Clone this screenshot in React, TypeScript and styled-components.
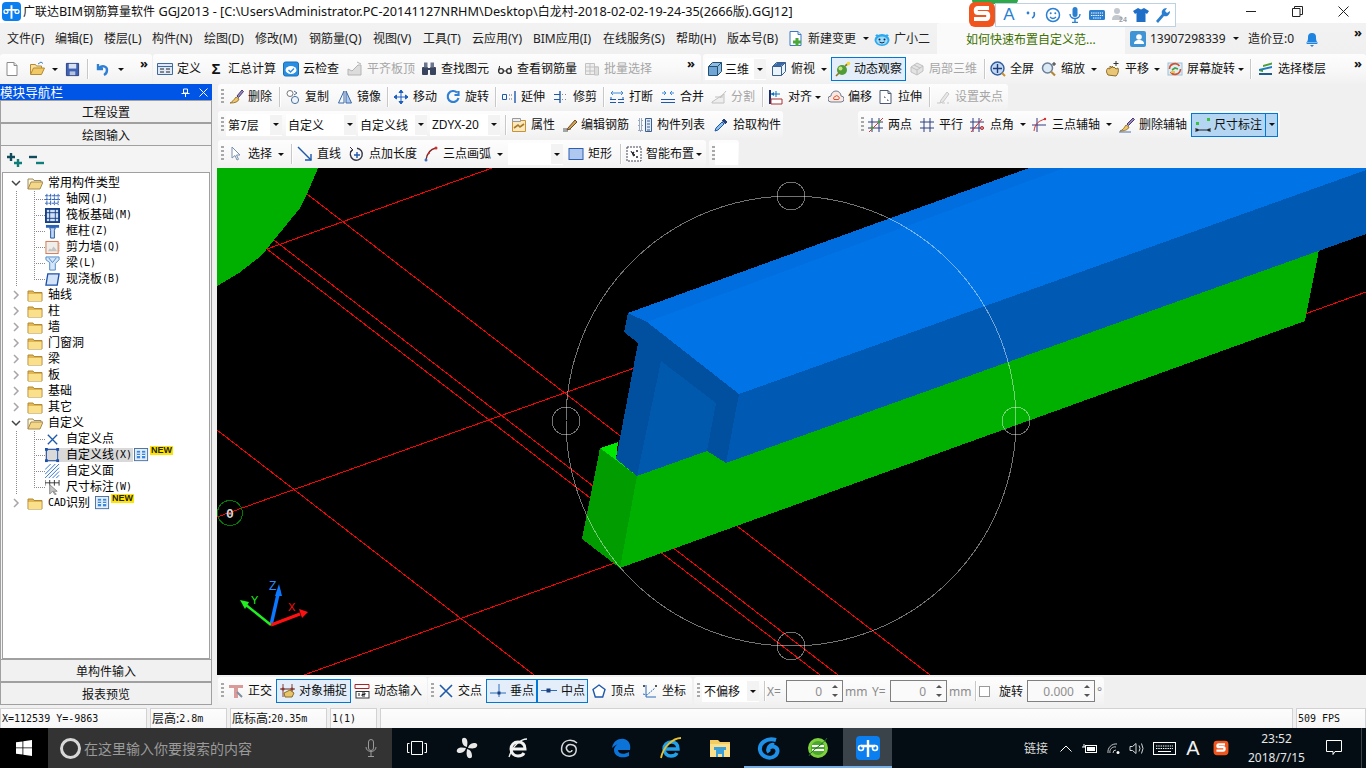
import React from "react";
import styled, { createGlobalStyle, css } from "styled-components";

const Global = createGlobalStyle`
  html, body { margin: 0; padding: 0; background: #f0f0f0; overflow: hidden; }
  body { font-family: "Noto Sans", "Noto Sans CJK SC", sans-serif; font-size: 12px; color: #111; }
  * { box-sizing: border-box; }
`;

const segBg = "linear-gradient(to bottom, #fdfdfd 0%, #f8f8f8 55%, #f1f1f1 100%)";

const Page = styled.div`
  width: 1366px; height: 768px; display: flex; flex-direction: column; overflow: hidden; background: #f0f0f0;
`;
const TitleBar = styled.div`
  height: 23px; background: #fff; display: flex; align-items: center; position: relative; flex: none;
`;
const TitleText = styled.div`
  margin-left: 2px; font-size: 12.7px; line-height: 23px; white-space: nowrap; color: #111;
`;
const Cjk = styled.span`
  font-size: 12px;
`;
const WinBtns = styled.div`
  margin-left: auto; display: flex; align-items: center;
`;
const WinBtn = styled.div`
  width: 46px; height: 23px; display: flex; align-items: center; justify-content: center;
`;
const Ime = styled.div`
  position: absolute; left: 968px; top: 0; width: 208px; height: 28px; display: flex; align-items: center;
`;
const ImeBox = styled.div`
  position: absolute; left: 27px; top: 3px; width: 181px; height: 24px; background: #fff; border: 1px solid #bcd2e2;
  display: flex; align-items: center; padding-left: 5px; gap: 6px;
`;
const ImeTop = styled.div`
  position: absolute; left: 4px; top: 0; width: 46px; height: 4px; background: #2fa84a; border-radius: 0 0 6px 6px;
`;
const ImeLogo = styled.div`
  position: absolute; left: 0; top: 1px;
`;
const ImeA = styled.span`
  width: 16px; flex: none; text-align: center; font-family: "Liberation Sans", sans-serif; font-size: 17px; line-height: 20px; color: #2a7fd0;
`;
const MenuRow = styled.div`
  height: 31px; display: flex; align-items: center; flex: none; background: linear-gradient(to bottom, #f2f2f2, #f0f0f0);
`;
const MenuItem = styled.div<{ $w: number }>`
  width: ${(p) => p.$w}px; flex: none; white-space: nowrap; font-size: 12px; line-height: 16px; display: flex; align-items: center;
  color: #222;
`;
const MenuText = styled.span`
  margin-left: 4px;
`;
const TipBox = styled.div`
  width: 188px; height: 31px; margin-left: 1px; background: #fafafa; border-radius: 3px 3px 0 0; display: flex; align-items: center;
  padding-left: 29px; color: #3c7000; font-size: 12px; flex: none;
`;
const Bar = styled.div`
  display: flex; flex: none; align-items: stretch;
`;
const Seg = styled.div<{ $w?: number; $h: number; $pl?: number; $ml?: number }>`
  width: ${(p) => (p.$w ? p.$w + "px" : "auto")}; height: ${(p) => p.$h}px; margin-left: ${(p) => p.$ml || 0}px;
  padding-left: ${(p) => p.$pl || 0}px; background: ${segBg}; border-radius: 3px; display: flex; align-items: center; flex: none;
`;
const Tool = styled.div<{ $w: number; $gap?: number; $on?: boolean }>`
  width: ${(p) => p.$w}px; flex: none; height: 24px; display: flex; align-items: center; gap: ${(p) => p.$gap ?? 4}px; white-space: nowrap;
  font-size: 12px; line-height: 16px;
  ${(p) =>
    p.$on &&
    css`
      background: #e3eefa; border: 1px solid #0078d7; padding-left: 3px;
    `}
`;
const HiTool = styled(Tool)`
  ${(p) =>
    p.$on &&
    css`
      background: #b4d6f2;
    `}
`;
const HiDrop = styled.div`
  width: 12px; height: 24px; flex: none; background: #b4d6f2; border: 1px solid #0078d7; border-left: 0; display: flex; align-items: center; justify-content: center;
`;
const Label = styled.span<{ $off?: boolean }>`
  color: ${(p) => (p.$off ? "#a6a6a6" : "#111")};
`;
const RotLabel = styled(Label)`
  width: 28px; flex: none;
`;
const Caret = styled.i<{ $ml?: number }>`
  display: block; width: 0; height: 0; flex: none; border-left: 3px solid transparent; border-right: 3px solid transparent; border-top: 3px solid #111;
  margin-left: ${(p) => p.$ml ?? 0}px;
`;
const Sep = styled.div<{ $mr?: number; $ml?: number }>`
  width: 1px; height: 20px; background: #c8c8c8; box-shadow: 1px 0 0 #fff; flex: none; margin-right: ${(p) => p.$mr ?? 5}px; margin-left: ${(p) => p.$ml ?? 0}px;
`;
const Grip = styled.div<{ $mr?: number }>`
  width: 3px; height: 16px; flex: none; margin-left: 3px; margin-right: ${(p) => p.$mr ?? 4}px;
  background: repeating-linear-gradient(to bottom, #a8a8a8 0, #a8a8a8 2px, transparent 2px, transparent 4px);
`;
const More = styled.span<{ $mr?: number }>`
  font-size: 13px; font-weight: 700; line-height: 12px; margin-left: auto; margin-right: ${(p) => p.$mr ?? 4}px; align-self: flex-start; margin-top: 3px; color: #111;
`;
const Combo = styled.div<{ $w: number; $mr?: number }>`
  width: ${(p) => p.$w}px; height: 22px; flex: none; background: #fff; display: flex; align-items: center; padding-left: 2px;
  margin-right: ${(p) => p.$mr || 0}px; white-space: nowrap; font-size: 12px; position: relative;
`;
const ComboDrop = styled.div`
  margin-left: auto; width: 12px; height: 20px; background: #f3f3f3; display: flex; align-items: center; justify-content: center; flex: none;
`;
const ComboText = styled.span`
  margin-left: 2px;
`;
const Spacer = styled.div<{ $w: number }>`
  width: ${(p) => p.$w}px; flex: none;
`;
const Body = styled.div`
  display: flex; height: 621px; flex: none;
`;
const Side = styled.div`
  width: 212px; margin-right: 5px; display: flex; flex-direction: column; flex: none;
`;
const SideHead = styled.div`
  height: 16px; background: #0054e6; color: #fff; display: flex; align-items: center; font-size: 12.6px; line-height: 15px; letter-spacing: 0;
  flex: none;
`;
const HeadGlyph = styled.svg<{ $ml: number }>`
  display: block; flex: none; margin-left: ${(p) => p.$ml}px;
`;
const SideBtn = styled.div`
  height: 23px; flex: none; border: 1px solid #a0a0a0; background: #f1f1f1; display: flex; align-items: center; justify-content: center; font-size: 12px;
`;
const SidePanel = styled.div`
  flex: 1; min-height: 0; display: flex; flex-direction: column; padding: 1px 1px 0 1px; border: 1px solid #a0a0a0; border-top: 0; border-bottom: 0; background: #f4f4f4;
`;
const TreeTools = styled.div`
  height: 25px; display: flex; align-items: center; gap: 6px; padding-left: 4px; flex: none;
`;
const Tree = styled.div`
  flex: 1; background: #fff; border: 1px solid #a0a0a0; padding-top: 2px; overflow: hidden;
`;
const dotV = (x: number) =>
  `linear-gradient(to bottom,#8a8a8a 50%,transparent 50%) ${x}px 0/1px 2px repeat-y`;
const dotSeg = (x: number) => `linear-gradient(to right,#8a8a8a 50%,transparent 50%) ${x}px 8px/2px 1px no-repeat`;
const TreeRow = styled.div<{ $child?: boolean; $rail?: boolean; $last?: boolean }>`
  height: 16px; display: flex; align-items: center; white-space: nowrap; position: relative; font-size: 12px; line-height: 16px;
  padding-left: ${(p) => (p.$child ? 42 : 8)}px; color: #000;
  ${(p) =>
    p.$child &&
    css`
      &::before {
        content: ""; position: absolute; left: 31px; top: 0; width: 12px; height: ${p.$last ? "9px" : "16px"};
        background: ${dotV(0)}, ${dotSeg(0)}, ${dotSeg(2)}, ${dotSeg(4)}, ${dotSeg(6)}, ${dotSeg(8)}, ${dotSeg(10)};
      }
    `}
  ${(p) =>
    p.$rail &&
    css`
      &::after {
        content: ""; position: absolute; left: 13px; top: 0; width: 1px; height: 16px; background: ${dotV(0)};
      }
    `}
`;
const Chevron = styled.span`
  width: 10px; flex: none; display: flex; justify-content: center; margin-right: 6px; position: relative; z-index: 1;
`;
const TreeFolder = styled.span`
  width: 17px; height: 14px; flex: none; margin-right: 4px; display: flex;
`;
const TreeIconBox = styled.span`
  width: 16px; height: 14px; flex: none; display: flex; margin-right: 5px; position: relative; z-index: 1;
`;
const SelBand = styled.span<{ $sel?: boolean }>`
  display: flex; align-items: center; height: 14px; padding-right: 1px;
  background: ${(p) => (p.$sel ? "#d9d9d9" : "transparent")};
`;
const Latin = styled.span`
  font-family: "DejaVu Sans Mono", "Liberation Mono", monospace; font-size: 10px;
`;
const Tile = styled.span<{ $ml?: number }>`
  display: inline-flex; margin-left: ${(p) => p.$ml ?? 1}px; flex: none;
`;
const NewTag = styled.span`
  font-family: "Liberation Sans", sans-serif; font-size: 9px; font-weight: 700; line-height: 9px; height: 9px; background: #ffe400; color: #222;
  padding: 0 1px; align-self: flex-start; margin-left: 1px; margin-top: -1px;
`;
const Right = styled.div`
  flex: 1; min-width: 0; display: flex; flex-direction: column;
`;
const RowGap = styled.div<{ $h: number; $w?: number }>`
  height: ${(p) => p.$h}px; flex: none; ${(p) => (p.$w ? `width:${p.$w}px;` : "")}
`;
const Canvas = styled.svg`
  display: block; width: 1149px; height: 507px; background: #000; flex: none;
`;
const Spin = styled.div<{ $w: number }>`
  width: ${(p) => p.$w}px; height: 22px; flex: none; border: 1px solid #808080; background: #fafafa; display: flex; align-items: center; justify-content: flex-end;
  color: #8f8f8f; font-size: 12px;
`;
const SpinArrows = styled.div`
  width: 15px; height: 100%; display: flex; flex-direction: column; align-items: center; justify-content: space-between; padding: 4px 0; margin-left: 5px; flex: none;
`;
const ArrowUp = styled.i`
  display: block; width: 0; height: 0; border-left: 3px solid transparent; border-right: 3px solid transparent; border-bottom: 3px solid #555;
`;
const ArrowDown = styled.i`
  display: block; width: 0; height: 0; border-left: 3px solid transparent; border-right: 3px solid transparent; border-top: 3px solid #555;
`;
const Gray = styled.span<{ $w: number; $ml?: number }>`
  width: ${(p) => p.$w}px; flex: none; color: #8a8a8a; font-size: 12px; white-space: nowrap; margin-left: ${(p) => p.$ml ?? 0}px;
`;
const Check = styled.span`
  width: 11px; height: 11px; border: 1px solid #9a9a9a; background: #fff; margin: 0 9px 0 0; flex: none;
`;
const Status = styled.div`
  height: 20px; margin-top: 3px; display: flex; gap: 3px; flex: none; align-items: stretch;
`;
const Cell = styled.div<{ $w?: number }>`
  ${(p) => (p.$w ? `width:${p.$w}px;flex:none;` : "flex:1;")}
  border: 1px solid #d2d2d2; border-bottom: 0; background: linear-gradient(to bottom,#fdfdfd,#f6f6f6); padding-left: 1px; display: flex; align-items: center;
  white-space: nowrap; font-size: 12px; line-height: 16px; color: #111;
`;
const Task = styled.div`
  height: 40px; flex: none; background: #030d13; display: flex; align-items: stretch; color: #fff;
`;
const Start = styled.div`
  width: 48px; background: #000; display: flex; align-items: center; justify-content: center; flex: none;
`;
const Search = styled.div`
  width: 344px; background: #333; display: flex; align-items: center; padding-left: 12px; flex: none; color: #9a9a9a; font-size: 14px;
`;
const SearchRing = styled.span`
  width: 21px; height: 21px; border-radius: 50%; border: 3px solid #d8d8d8; margin-right: 3px; flex: none;
`;
const MicWrap = styled.span`
  margin-left: auto; margin-right: 15px; display: flex;
`;
const TaskBtn = styled.div<{ $w: number; $active?: boolean; $run?: boolean }>`
  width: ${(p) => p.$w}px; flex: none; display: flex; align-items: center; justify-content: center;
  background: ${(p) => (p.$active ? "#394349" : "transparent")};
  box-shadow: ${(p) => (p.$run ? "inset 0 -2px 0 #76aee6" : "none")};
`;
const Tray = styled.div`
  margin-left: auto; display: flex; align-items: stretch; position: relative;
`;
const TrayItem = styled.div<{ $w: number }>`
  width: ${(p) => p.$w}px; flex: none; display: flex; align-items: center; justify-content: center; color: #dcdcdc; font-size: 12px; position: relative;
`;
const TrayA = styled.span`
  font-family: "Liberation Sans", sans-serif; font-size: 20px; line-height: 22px; color: #f0f0f0;
`;
const Clock = styled.div`
  width: 73px; margin-left: 4px; flex: none; display: flex; flex-direction: column; align-items: center; justify-content: center; line-height: 19px;
  font-size: 12px; color: #e6e6e6;
`;
const EdgeTail = styled.div`
  width: 12px; flex: none; margin-left: 0; background: linear-gradient(to right, transparent 7px, #3d4347 7px, #3d4347 8px, transparent 8px);
`;
const TextSigma = styled.span`
  width: 16px; text-align: center; font-family: "Liberation Sans", sans-serif; font-size: 15px; font-weight: 700; line-height: 16px; color: #111; flex: none;
`;

const Svg = styled.svg`
  display: block; flex: none;
`;
const SpacedSvg = styled(Svg)<{ $ml: number }>`
  margin-left: ${(p) => p.$ml}px;
`;

const blue = "#1f5fc0";
const icons: Record<string, React.ReactNode> = {
  new: <><path d="M3 1.5h7l3 3v10H3z" fill="#fff" stroke="#8a8a8a" /><path d="M10 1.5v3h3" fill="#e6e6e6" stroke="#8a8a8a" /></>,
  open: <><path d="M1.5 13V3.5h5l1 1.5h5v2" fill="#f7e0a0" stroke="#b58a32" /><path d="M1.5 13.5l3-6.5h11l-3 6.5z" fill="#f2c864" stroke="#b58a32" /><path d="M9 3l3-2 2 1.5" stroke="#3a80c8" fill="none" /></>,
  save: <><path d="M1.5 1.5h13v13h-13z" fill="#3f62b4" stroke="#2a3f80" /><path d="M4 2h8v5H4z" fill="#d8e2f4" /><path d="M5 10h6v4H5z" fill="#b8c4dc" /></>,
  undo: <path d="M3 3v5h5M4 7c3-3 8-2 8 2 0 2-1 4-3 5" fill="none" stroke="#2f7fd4" strokeWidth="2.4" />,
  define: <><path d="M.5 2.5h15v11H.5z" fill="#dfe9f7" stroke="#406a9e" /><path d="M1 5.5h14" stroke="#406a9e" /><path d="M3 8h4M3 11h4M9 8h4M9 11h4" stroke="#222" /></>,
  cloudcheck: <><rect x=".5" y="1" width="15" height="14" rx="2" fill="#2a8fe0" stroke="#1570bb" /><ellipse cx="8" cy="9" rx="5.5" ry="4" fill="#fff" /><path d="M5.5 9l2 2 3.5-3.5" fill="none" stroke="#2a8fe0" strokeWidth="1.4" /></>,
  flat: <path d="M1 14V8l4 2 6-6h3v10zM10 1l4 2" fill="#dcdcdc" stroke="#b4b4b4" />,
  find: <><rect x="1" y="6" width="6" height="8" rx="1" fill="#39455e" /><rect x="9" y="6" width="6" height="8" rx="1" fill="#39455e" /><rect x="3" y="1.5" width="3.5" height="5" fill="#6a7690" /><rect x="9.5" y="1.5" width="3.5" height="5" fill="#6a7690" /><path d="M7 8h2" stroke="#39455e" strokeWidth="2" /></>,
  glasses: <><circle cx="4" cy="10" r="2.4" fill="none" stroke="#333" strokeWidth="1.4" /><circle cx="12" cy="10" r="2.4" fill="none" stroke="#333" strokeWidth="1.4" /><path d="M6.5 10h3M1.6 10l1-5M14.4 10l-1-5" stroke="#333" /></>,
  batch: <><path d="M1.5 2.5h9v11h-9z" fill="#eee" stroke="#c2c2c2" /><path d="M1.5 6h13M1.5 10h13M6 2.5v11" stroke="#c2c2c2" /><path d="M10.5 6h4v8h-4z" fill="#ddd" stroke="#c2c2c2" /></>,
  cube: <><path d="M1.5 5.5l4-4h9v9l-4 4h-9z" fill="#8fbce0" stroke="#24506f" /><path d="M1.5 5.5h9v9M10.5 5.5l4-4" fill="none" stroke="#24506f" /><path d="M2 6h8v8H2z" fill="#6fa6d6" /></>,
  top: <><path d="M1.5 5.5l4-4h9v9l-4 4h-9z" fill="#eaf2fa" stroke="#3a5f8a" /><path d="M1.5 5.5h9v9M10.5 5.5l4-4" fill="none" stroke="#3a5f8a" /><path d="M2 5l4-3h8l-4 3z" fill="#3a68a8" /></>,
  orbit: <><circle cx="7" cy="9" r="5" fill="#4f9c38" /><circle cx="5.5" cy="7.5" r="2" fill="#c7e080" /><path d="M1 15l3-3M10 5l4-3" stroke="#8a7a20" strokeWidth="1.6" /><circle cx="13.5" cy="2.5" r="1.8" fill="#f3d82e" /></>,
  local: <><path d="M2 6l6-4 6 3v5l-6 4-6-3z" fill="#e3e3e3" stroke="#c0c0c0" /><path d="M2 6l6 3 6-4M8 9v5M5 4l6 3" fill="none" stroke="#c0c0c0" /></>,
  full: <><circle cx="7.5" cy="7.5" r="6.5" fill="#c5d8f2" stroke="#2f5d9c" strokeWidth="1.4" /><path d="M7.5 3v9M3 7.5h9" stroke="#1c3f7c" strokeWidth="1.4" /><path d="M12 12l3 3" stroke="#c89030" strokeWidth="2" /></>,
  zoom: <><circle cx="6.5" cy="7" r="5" fill="#dbe8f6" stroke="#6c7f95" strokeWidth="1.5" /><path d="M10 10.5l4 4" stroke="#b28838" strokeWidth="2.2" /><path d="M13 1v4M11 3h4" stroke="#333" /></>,
  pan: <><path d="M3 14c-2-3-2-5 0-7l2 1V5l2 2V5l2 2V6l2 2 2-1c1 3 0 6-2 8z" fill="#e8c675" stroke="#8a6c28" /><path d="M11 0v5M8.5 2.5h5" stroke="#333" /></>,
  rotate: <><rect x="1" y="2" width="14" height="12" fill="#dceef8" stroke="#9cc0d8" /><path d="M2.5 8a5.5 5.5 0 0 1 10-3M13.5 8a5.5 5.5 0 0 1-10 3" fill="none" stroke="#d8502e" strokeWidth="1.6" /><path d="M5 9l3-2 3 1" stroke="#4aa040" strokeWidth="1.6" fill="none" /><rect x="4" y="10" width="4" height="2" fill="#efc440" /></>,
  floors: <><path d="M5 4l9-2.5v2L5 6z" fill="#4aa03c" /><path d="M1 8l13-3v2L1 10z" fill="#1f7ac4" /><path d="M1 12h13v2H1z" fill="#1f5a8c" /><path d="M1 10l4-2 0 3z" fill="#36963a" /></>,
  brush: <><path d="M9 7l5-6 1.5 1.5-5 6z" fill="#9a8abf" stroke="#4a3a70" /><path d="M8 8l3 2c-1 3-4 4-9 4 2-1 4-3 6-6z" fill="#efc66c" stroke="#9a7a30" /></>,
  copy: <><circle cx="5" cy="4.5" r="3" fill="#fff" stroke="#777" /><circle cx="10" cy="11" r="3.6" fill="#eef3fa" stroke="#49709c" /><path d="M9 2l3 2-3 2" fill="none" stroke="#49709c" /></>,
  mirror: <><path d="M7 2v12H1.5z" fill="#f3f8fd" stroke="#3a68a8" /><path d="M9 2v12h5.5z" fill="#aecaec" stroke="#3a68a8" /></>,
  move: <path d="M8 1v14M1 8h14M8 1L6 3.5h4zM8 15l-2-2.5h4zM1 8l2.5-2v4zM15 8l-2.5-2v4z" fill={blue} stroke={blue} />,
  spin: <path d="M12 3.5A5.5 5.5 0 1 0 13.5 9M13.5 2v4h-4" fill="none" stroke="#2f7fd4" strokeWidth="2.2" />,
  extend: <><path d="M1.5 5.5h4v5h-4z" fill="none" stroke="#1e58ac" /><path d="M8 6h1M10 6h1M8 10h1M10 10h1" stroke="#666" /><path d="M14 2v12" stroke="#1e58ac" strokeWidth="1.4" /></>,
  trim: <><path d="M7 2v12" stroke="#1e58ac" strokeWidth="1.4" /><path d="M1 5.5h6M1 10.5h6" stroke="#1e58ac" /><path d="M9 5.5h1M12 5.5h1M9 10.5h1M12 10.5h1" stroke="#888" /></>,
  breakI: <><path d="M1 10.5h6M9 10.5h6M1 13.5h6M9 13.5h6" stroke="#1e58ac" /><path d="M2 10V8M14 10V8" stroke="#1e58ac" /><path d="M2 4h12M2 4l2-2M2 4l2 2M14 4l-2-2M14 4l-2 2" stroke="#3d8adc" fill="none" /></>,
  merge: <><path d="M1 10.5h14M1 13.5h14" stroke="#1e58ac" /><path d="M2 4h4M14 4h-4M6 4L4 2M6 4L4 6M10 4l2-2M10 4l2 2" stroke="#3d8adc" fill="none" /></>,
  split: <><path d="M1 13l12-8v9H1z" fill="#eee" stroke="#c2c2c2" /><path d="M4 8h8M15 2L9 9" stroke="#c2c2c2" /></>,
  align: <><path d="M2 1v14" stroke="#1d2d6a" strokeWidth="2" /><path d="M3 10h11v5H3z" fill="#fff" stroke="#a83030" /><path d="M3 5h9M8 2v6" stroke="#0d70bd" /><path d="M3 5l3-2v4z" fill="#0d70bd" /></>,
  offset: <><path d="M3 13a3 3 0 0 1 0-6 5 5 0 0 1 10 0 3 3 0 0 1 0 6z" fill="#fbe7e0" stroke="#6c7f95" /><path d="M6 10.5a2 2 0 0 1 1-3 2.5 2.5 0 0 1 3.5 0 2 2 0 0 1 0 3z" fill="none" stroke="#d8502e" /></>,
  stretch: <><path d="M2 1.5h8l3 3v10H2z" fill="#fff" stroke="#4a5a70" /><path d="M10 1.5v3h3M6 8h1v1M9 11h1v1" fill="none" stroke="#4a5a70" /></>,
  grip: <><path d="M2 14h3M7 14h3M12 14h2" stroke="#c8c8c8" /><path d="M6 11l6-8 2 2-6 8-3 1z" fill="#e8e8e8" stroke="#c8c8c8" /></>,
  props: <><path d="M1.5 3.5h13v11h-13z" fill="#fbe8c0" stroke="#c99232" /><path d="M1.5 1.5h8v3h-8z" fill="#eee" stroke="#999" /><path d="M3 11l4-3 2 2 4-3" stroke="#a87a28" strokeWidth="1.6" fill="none" /></>,
  edit: <><path d="M1 12h8M1 14h5" stroke="#555" /><path d="M6 11l7-8 2 2-7 7-3 1z" fill="#d4a04c" stroke="#66502a" /></>,
  list: <><path d="M8.5 1.5h6v13h-6z" fill="#dfeafa" stroke="#3a5f8a" /><path d="M10 4h3M10 7h3M10 10h3M10 13h3" stroke="#3a5f8a" /><path d="M2 2h3v3H2zM2 7h3v3H2zM2 12h3v2H2z" fill="none" stroke="#3a5f8a" strokeDasharray="1 1" /></>,
  dropper: <><path d="M2 14l1-3 6-6 2 2-6 6z" fill="#8fc0ea" stroke="#1e58ac" /><path d="M9 4l2-2 3 3-2 2" fill="#26407c" stroke="#26407c" /></>,
  two: <><path d="M4 1v14M11 1v14M0 5h15M0 11h15" stroke="#2f3f80" /><path d="M1 15L15 1" stroke="#e03030" /><circle cx="4" cy="11" r="1.4" fill="#3ca040" /><circle cx="11" cy="5" r="1.4" fill="#3ca040" /></>,
  parallel: <path d="M5 1v14M11 1v14M1 5h14M1 11h14" stroke="#2f3f80" fill="none" />,
  angle: <><path d="M3 1v14M9 1v14M0 5h14M0 11h14" stroke="#2f3f80" /><path d="M1 15L12 2" stroke="#e03030" /><circle cx="12" cy="11" r="1.6" fill="none" stroke="#d03030" /></>,
  threeAux: <><path d="M5 1v14M0 8h14" stroke="#2f3f80" /><path d="M2 14c1-8 5-10 11-12" fill="none" stroke="#d83030" /><circle cx="13" cy="2" r="1.2" fill="#d83030" /></>,
  delAux: <><path d="M8 7l6-6 1.5 1.5-6 6z" fill="#9a8abf" stroke="#4a3a70" /><path d="M7 8l3 2c-1 3-5 4-9 4 3-1 4-3 6-6z" fill="#efc66c" stroke="#9a7a30" /><path d="M0 15h12" stroke="#4a70b0" /></>,
  dim: <><path d="M1 11v4M15 11v4M1 13h14M1 13l2-1v2zM15 13l-2-1v2z" stroke="#222" fill="#222" /><rect x="1" y="5" width="3" height="3" fill="#3cc040" /><rect x="12" y="1" width="3" height="3" fill="#3cc040" /></>,
  cursor: <path d="M4 1v11l3-2.5 2 4.5 1.5-.7-2-4.3h3.5z" fill="#fff" stroke="#7890b0" />,
  line: <><path d="M1 1l13 13" stroke="#1e58ac" strokeWidth="1.4" /><path d="M14 8v6H8" fill="none" stroke="#1e58ac" strokeWidth="1.4" /></>,
  plusLen: <><path d="M3 4a6 6 0 1 0 5-1.8" fill="none" stroke="#334" strokeWidth="1.4" /><path d="M1 1l3 3-3 2" fill="none" stroke="#334" /><path d="M8 6v6M5 9h6" stroke="#1e58ac" strokeWidth="1.4" /></>,
  arc: <><path d="M3 14C4 7 8 3 13 2" fill="none" stroke="#7f2020" strokeWidth="1.3" /><circle cx="3" cy="14" r="1.5" fill="#3a70c0" /><circle cx="13" cy="2" r="1.5" fill="#d03030" /><circle cx="6" cy="7" r="1" fill="#d03030" /></>,
  rect: <rect x="1" y="2.5" width="14" height="11" fill="#aec8f0" stroke="#2f5fb0" />,
  smart: <><rect x="1" y="1" width="14" height="14" fill="#fff" stroke="#445" strokeDasharray="2 1" /><path d="M5 5l1 2 2-1-1 2 2 1-2 1M11 4v2M10 5h2M11 10v2M10 11h2" stroke="#223" /></>,
  ortho: <><path d="M1 2h14v3h-5v10H6V5H1z" fill="#d99a9a" /><path d="M9 9l5 5" stroke="#7f8fa0" strokeWidth="2" /></>,
  snap: <><path d="M3 1v13M12 1v13" stroke="#8a3a30" /><path d="M0 6h15" stroke="#6a2a20" /><circle cx="3" cy="6" r="1.6" fill="#8a3a30" /><circle cx="12" cy="6" r="1.6" fill="#8a3a30" /><path d="M4 10l6-3 4 3-2 4-7 0z" fill="#e8c468" stroke="#8a6c28" /></>,
  dyn: <><path d="M1 1.5h14M1 5.5h14M1 1.5v4M15 1.5v4" stroke="#a02828" /><rect x="2" y="8.5" width="13" height="6.5" fill="#fff" stroke="#333" /><path d="M5 10v3M8 10h3v1.5H8V13h3" stroke="#222" fill="none" /></>,
  cross: <path d="M2 2l12 12M14 2L2 14" stroke="#1e58ac" strokeWidth="1.6" />,
  perp: <><path d="M0 10h16" stroke="#2b6cb8" /><path d="M9 1v13" stroke="#2b6cb8" /><rect x="7.5" y="8.5" width="3" height="3" fill="#1c3f80" /></>,
  mid: <><path d="M0 7.5h16" stroke="#2b6cb8" /><rect x="5.5" y="5.5" width="4" height="4" fill="#1c3f80" /></>,
  vertex: <path d="M8 2l6 4.5-2.3 7.5H4.3L2 6.5z" fill="#fff" stroke="#1e58ac" strokeWidth="1.4" />,
  coord: <><path d="M4 2v12h10" stroke="#2b6cb8" fill="none" /><path d="M1 11l4 1 8-7" stroke="#2b6cb8" fill="none" strokeDasharray="2 1" /><path d="M1 2l2 2M3 2L1 4M13 2l2 2M15 2l-2 2" stroke="#555" /></>,
  addTree: <><path d="M1 5h8M5 1v8" stroke="#0f4d5c" strokeWidth="2.4" /><path d="M8 11h8M12 7v8" stroke="#0f7d7a" strokeWidth="2.4" /></>,
  delTree: <><path d="M1 5h8" stroke="#0f4d5c" strokeWidth="2.4" /><path d="M8 11h8" stroke="#0f7d7a" strokeWidth="2.4" /></>,
  tGrid: <path d="M2 2v12M6 2v12M10 2v12M14 2v12M0 4h16M0 8h16M0 12h14" stroke="#2c5fb8" fill="none" strokeDasharray="3 .6" />,
  tRaft: <><rect x="1" y="1" width="14" height="14" fill="#cfe0f4" stroke="#163f86" strokeWidth="2" /><path d="M5 1v14M11 1v14M1 5h14M1 11h14" stroke="#163f86" /></>,
  tCol: <><path d="M1 1h14v3H1z" fill="#2a62b8" /><path d="M5 4h6l-1 3v8H6V7z" fill="#c2d7f2" stroke="#1c4f9c" /></>,
  tWall: <><rect x="1" y="1.5" width="13" height="13" fill="#f0eeea" stroke="#d0744c" /><path d="M3 12l2-3 2 1 2-3 2 2 2 3H3z" fill="#c4c4c4" /><path d="M15 3v10" stroke="#d0744c" strokeDasharray="1 1" /></>,
  tBeam: <><path d="M1 1h14v3l-4 4v7H5V7L1 4z" fill="#d4e6f8" stroke="#4a88c8" /><path d="M4 2l4 5 4-5" stroke="#4a88c8" fill="none" /></>,
  tSlab: <path d="M3 2h12l-2 12H1z" fill="#d4e4f8" stroke="#1c50a8" strokeWidth="1.4" />,
  tPoint: <path d="M3 3l10 10M13 3L3 13" stroke="#1e58ac" strokeWidth="1.4" />,
  tLine: <><rect x="1.5" y="1.5" width="12" height="12" fill="none" stroke="#1c50a8" /><rect x="0" y="0" width="3" height="3" fill="#1c50a8" /><rect x="12" y="0" width="3" height="3" fill="#1c50a8" /><rect x="0" y="12" width="3" height="3" fill="#1c50a8" /><rect x="12" y="12" width="3" height="3" fill="#1c50a8" /></>,
  tFace: <path d="M0 6L6 0M0 11L11 0M0 15L15 0M4 15L15 4M8 15l7-7M12 15l3-3" stroke="#2c6fd0" />,
  tDim: <><path d="M0 3h15M0 0v6M15 0v6M5 0v6M10 0v6" stroke="#333" /><path d="M5 5v10l3-3 3 4 1-1-3-3h4z" fill="#c4c4c4" stroke="#8a8a8a" /></>,
  tile: <><rect x=".5" y=".5" width="14" height="13" fill="#e4effb" stroke="#4a6f9c" /><rect x="3" y="3" width="3.5" height="8" fill="#3a88dc" /><rect x="8.5" y="3" width="3.5" height="8" fill="#3a88dc" /><path d="M3 5.5h3.5M3 8h3.5M8.5 5.5H12M8.5 8H12" stroke="#fff" /></>,
  folder: <><path d="M1 13V3h5l1 1.5h8V13z" fill="#e2b650" stroke="#b08a38" /><path d="M1.5 6h13v7h-13z" fill="#fbe08c" /></>,
  folderOpen: <><path d="M1 13V3h5l1 1.5h7V6" fill="#fff6d8" stroke="#9a8a60" /><path d="M1 13l3-7h12l-3 7z" fill="#f3d88a" stroke="#a88a48" /></>,
  change: <><path d="M2 .5h8l3 3v11H2z" fill="#fff" stroke="#3a78c8" /><path d="M10 .5v3h3" fill="#dbe9f8" stroke="#3a78c8" /><path d="M9 7v8M5 11h8" stroke="#4aa83a" strokeWidth="3" /></>,
  ai: <><ellipse cx="8" cy="9" rx="7.5" ry="6" fill="#2aa8f0" /><path d="M1 5l2-2 2 2M15 5l-2-2-2 2" fill="#2aa8f0" /><ellipse cx="8" cy="9.5" rx="5.5" ry="4" fill="#9edcfa" /><circle cx="5.5" cy="8.5" r="1" fill="#124" /><circle cx="10.5" cy="8.5" r="1" fill="#124" /><path d="M5.5 11q2.5 2 5 0" stroke="#124" fill="none" /></>,
  user: <><rect width="16" height="16" rx="2" fill="#3f94d6" /><circle cx="9" cy="6" r="2.8" fill="#fff" /><path d="M4 13c0-3 2-4 5-4s5 1 5 4z" fill="#fff" /></>,
  bell: <><path d="M3 11c1-2 1-3 1-5a4 4 0 0 1 8 0c0 2 0 3 1 5z" fill="#1f83e0" /><path d="M2 11.5h12L13 13H3zM6 14h4l-2 2z" fill="#1f83e0" /></>,
};

const Ic = ({ n, s = 16 }: { n: string; s?: number }) => (
  <Svg width={s} height={s} viewBox="0 0 16 16">{icons[n]}</Svg>
);

type T = { l?: string; i?: string; w: number; off?: boolean; caret?: number; gap?: number; sep?: number };
const ToolRun = ({ items }: { items: T[] }) => (
  <>
    {items.map((t, k) =>
      t.sep !== undefined ? (
        <Sep key={k} $mr={t.sep} />
      ) : (
        <Tool key={k} $w={t.w} $gap={t.gap}>
          {t.i === "sigma" ? <TextSigma>Σ</TextSigma> : t.i ? <Ic n={t.i} /> : null}
          {t.l ? <Label $off={t.off}>{t.l}</Label> : null}
          {t.caret !== undefined ? <Caret $ml={t.caret - (t.gap ?? 4)} /> : null}
        </Tool>
      )
    )}
  </>
);

const menu: [string, number][] = [
  ["文件(F)", 48], ["编辑(E)", 49], ["楼层(L)", 48], ["构件(N)", 52], ["绘图(D)", 51], ["修改(M)", 54], ["钢筋量(Q)", 64],
  ["视图(V)", 50], ["工具(T)", 49], ["云应用(Y)", 61], ["BIM应用(I)", 70], ["在线服务(S)", 73], ["帮助(H)", 51], ["版本号(B)", 61],
];

const S = { w: 0, sep: 5 } as T;
const row1a: T[] = [
  { i: "define", l: "定义", w: 51 }, { i: "sigma", l: "汇总计算", w: 75 }, { i: "cloudcheck", l: "云检查", w: 64 },
  { i: "flat", l: "平齐板顶", w: 74, off: true }, { i: "find", l: "查找图元", w: 76 }, { i: "glasses", l: "查看钢筋量", w: 87 }, { i: "batch", l: "批量选择", w: 85, off: true },
];
const row1c: T[] = [
  { i: "full", l: "全屏", w: 51 }, { i: "zoom", l: "缩放", w: 64, caret: 6 }, { i: "pan", l: "平移", w: 62, caret: 5 }, { i: "rotate", l: "屏幕旋转", w: 83, caret: 3 },
  { w: 0, sep: 7 }, { i: "floors", l: "选择楼层", w: 74 },
];
const row2: T[] = [
  { i: "brush", l: "删除", w: 51 }, S, { i: "copy", l: "复制", w: 52 }, { i: "mirror", l: "镜像", w: 50 }, S, { i: "move", l: "移动", w: 52 }, { i: "spin", l: "旋转", w: 50 }, S,
  { i: "extend", l: "延伸", w: 52 }, { i: "trim", l: "修剪", w: 50 }, S, { i: "breakI", l: "打断", w: 51 }, { i: "merge", l: "合并", w: 51 }, { i: "split", l: "分割", w: 51, off: true }, S,
  { i: "align", l: "对齐", w: 60, caret: 3 }, { i: "offset", l: "偏移", w: 50 }, { i: "stretch", l: "拉伸", w: 51 }, S, { i: "grip", l: "设置夹点", w: 72, off: true },
];
const row3a: T[] = [
  { i: "props", l: "属性", w: 51 }, { i: "edit", l: "编辑钢筋", w: 75, gap: 3 }, { i: "list", l: "构件列表", w: 76 }, { i: "dropper", l: "拾取构件", w: 70 },
];
const row3b: T[] = [
  { i: "two", l: "两点", w: 51 }, { i: "parallel", l: "平行", w: 51 }, { i: "angle", l: "点角", w: 62, caret: 6 }, { i: "threeAux", l: "三点辅轴", w: 87, caret: 6 }, { i: "delAux", l: "删除辅轴", w: 72 },
];
const row4a: T[] = [
  { i: "cursor", l: "选择", w: 63, caret: 6 }, S, { i: "line", l: "直线", w: 52 }, { i: "plusLen", l: "点加长度", w: 74 }, { i: "arc", l: "三点画弧", w: 85, caret: 6 },
];
const row4b: T[] = [
  { i: "rect", l: "矩形", w: 52 }, S, { i: "smart", l: "智能布置", w: 80, caret: 2 },
];
const bot1: T[] = [{ i: "ortho", l: "正交", w: 48 }];
const bot2: T[] = [{ i: "dyn", l: "动态输入", w: 73 }];
const bot3: T[] = [{ i: "cross", l: "交点", w: 48 }];
const bot4: T[] = [{ i: "vertex", l: "顶点", w: 51 }, { i: "coord", l: "坐标", w: 50 }];

const RedLine = ({ d }: { d: string }) => <path d={d} stroke="#ff0000" fill="none" />;

const MiniIme = () => (
  <>
    <ImeA>A</ImeA>
    <Svg width="16" height="16" viewBox="0 0 16 16"><circle cx="5" cy="6" r="1.4" fill="#2a7fd0" /><path d="M11 5c1 3 0 5-2 6" stroke="#2a7fd0" strokeWidth="1.6" fill="none" /></Svg>
    <Svg width="16" height="16" viewBox="0 0 16 16"><circle cx="8" cy="8" r="6.5" fill="none" stroke="#2a7fd0" strokeWidth="1.5" /><circle cx="5.7" cy="6.3" r="1" fill="#2a7fd0" /><circle cx="10.3" cy="6.3" r="1" fill="#2a7fd0" /><path d="M5 10q3 3 6 0" fill="none" stroke="#2a7fd0" strokeWidth="1.3" /></Svg>
    <Svg width="16" height="16" viewBox="0 0 16 16"><rect x="5.5" y="0" width="5" height="10" rx="2.5" fill="#2a7fd0" /><path d="M3 7c0 6 10 6 10 0M8 12v3M5 15.5h6" fill="none" stroke="#2a7fd0" strokeWidth="1.4" /></Svg>
    <Svg width="16" height="16" viewBox="0 0 16 16"><rect x="0" y="3" width="16" height="10" rx="1.5" fill="#2a7fd0" /><path d="M2 6h12M2 8.5h12M4 11h8" stroke="#fff" strokeDasharray="1.4 .8" /></Svg>
    <Svg width="16" height="16" viewBox="0 0 16 16"><circle cx="6" cy="4" r="3" fill="#c2c8ce" /><path d="M1 13c0-4 2-5 5-5s4 1 5 2v3z" fill="#c2c8ce" /><text x="8" y="15" fontFamily="Liberation Sans" fontSize="7" fontWeight="700" fill="#9aa0a6">24</text></Svg>
    <Svg width="16" height="16" viewBox="0 0 16 16"><path d="M5 1l3 1.5L11 1l5 3-2 3-1.5-1v9h-9V6L2 7 0 4z" fill="#1f6fc8" /></Svg>
    <Svg width="16" height="16" viewBox="0 0 16 16"><path d="M1 14l6-7c-1-3 1-6 5-6l-2 3 2 2 3-2c0 4-3 6-6 5l-6 7z" fill="#2a7fd0" /></Svg>
  </>
);

const TreeCollapsed = ({ l, tail }: { l: React.ReactNode; tail?: React.ReactNode }) => (
  <TreeRow>
    <Chevron><Svg width="8" height="10" viewBox="0 0 8 10"><path d="M2 1l4 4-4 4" fill="none" stroke="#a6a6a6" strokeWidth="1.5" /></Svg></Chevron>
    <TreeFolder><Ic n="folder" s={16} /></TreeFolder>
    {l}
    {tail}
  </TreeRow>
);
const TreeOpen = ({ l }: { l: string }) => (
  <TreeRow>
    <Chevron><Svg width="10" height="8" viewBox="0 0 10 8"><path d="M1 2l4 4 4-4" fill="none" stroke="#444" strokeWidth="1.5" /></Svg></Chevron>
    <TreeFolder><Ic n="folderOpen" s={16} /></TreeFolder>
    {l}
  </TreeRow>
);
const TreeChild = ({ i, l, k, last, sel, rail, tail }: { i: string; l: string; k?: string; last?: boolean; sel?: boolean; rail?: boolean; tail?: boolean }) => (
  <TreeRow $child $last={last} $rail={rail}>
    <SelBand $sel={sel}>
      <TreeIconBox><Ic n={i} s={15} /></TreeIconBox>
      {l}{k ? <Latin>({k})</Latin> : null}
    </SelBand>
    {tail ? (<><Tile><Ic n="tile" s={15} /></Tile><NewTag>NEW</NewTag></>) : null}
  </TreeRow>
);

const TaskIcon = ({ n }: { n: string }) => {
  const d: Record<string, React.ReactNode> = {
    fan: <path d="M12 11c-4-1-5-4-5-7s4-3 5 0 0 5 0 7zm1 1c1-4 4-5 7-5s3 4 0 5-5 0-7 0zm-1 1c4 1 5 4 5 7s-4 3-5 0 0-5 0-7zm-1-1c-1 4-4 5-7 5s-3-4 0-5 5 0 7 0z" fill="#e8e8e8" />,
    e1: <><path d="M5 13h14c0-5-3-7-7-7s-7 3-7 7 3 7 7 7c3 0 5-1 6-3" fill="none" stroke="#f2f2f2" strokeWidth="3" /><path d="M3 21C7 9 15 3 21 3" fill="none" stroke="#f2f2f2" strokeWidth="1.3" /></>,
    swirl: <path d="M20 7C16 3 7 3 5 10s3 11 9 10 7-9 2-11-8 2-6 5 5 2 5 0" fill="none" stroke="#d8d8d8" strokeWidth="1.5" />,
    edge: <path d="M3 12C4 5 10 2 15 3s7 6 6 11H9c0 4 6 5 11 2v4c-6 3-15 1-15-6 0-3 3-6 6-7-3 1-6 3-8 5z" fill="#0c74d8" />,
    ie: <><path d="M5 13h14c0-5-3-7-7-7s-7 3-7 7 3 7 7 7c3 0 5-1 6-3" fill="none" stroke="#22a0ea" strokeWidth="3.4" /><path d="M2 22C4 11 14 2 22 2" fill="none" stroke="#e8c030" strokeWidth="1.8" /></>,
    files: <><path d="M2 4h8l2 2h10v15H2z" fill="#f3cc64" /><path d="M2 8h20v13H2z" fill="#fbe08c" /><path d="M8 14h8v7h-2v-3h-4v3H8z" fill="#3aa0dc" /><path d="M6 11h12v3H6z" fill="#3aa0dc" /></>,
    g: <path d="M19 4C9 1 2 8 3 14s8 9 13 7 6-8 2-10-9 2-6 5c-2-4 1-8 5-7" fill="none" stroke="#1e90e8" strokeWidth="4" />,
    gball: <><circle cx="12" cy="12" r="10" fill="#7fd040" /><circle cx="12" cy="12" r="7" fill="#4aa82a" /><path d="M6 10h12M6 14h12" stroke="#fff" strokeWidth="2" /><path d="M3 20C5 14 18 8 21 2" fill="none" stroke="#1f6a2a" /></>,
    app: <><rect x="0" y="0" width="24" height="24" rx="4" fill="#0b7ff0" /><path d="M12 4v17M5 10h14" stroke="#fff" strokeWidth="2.4" /><circle cx="5" cy="12" r="2.5" fill="none" stroke="#fff" strokeWidth="1.6" /><circle cx="19" cy="12" r="2.5" fill="none" stroke="#fff" strokeWidth="1.6" /></>,
  };
  return <Svg width="24" height="24" viewBox="0 0 24 24">{d[n]}</Svg>;
};

export default function App() {
  return (
    <Page>
      <Global />
      <TitleBar>
        <SpacedSvg $ml={2} width="19" height="19" viewBox="0 0 24 24"><rect x="0" y="0" width="24" height="24" rx="5" fill="#0b7ff0" /><path d="M12 4v17M5 10h14" stroke="#fff" strokeWidth="2.4" /><circle cx="5" cy="12" r="2.5" fill="none" stroke="#fff" strokeWidth="1.6" /><circle cx="19" cy="12" r="2.5" fill="none" stroke="#fff" strokeWidth="1.6" /></SpacedSvg>
        <TitleText><Cjk>广联达</Cjk>BIM<Cjk>钢筋算量软件</Cjk> GGJ2013 - [C:\Users\Administrator.PC-20141127NRHM\Desktop\<Cjk>白龙村</Cjk>-2018-02-02-19-24-35(2666<Cjk>版</Cjk>).GGJ12]</TitleText>
        <Ime>
          <ImeTop />
          <ImeBox><MiniIme /></ImeBox>
          <ImeLogo>
            <Svg width="28" height="27" viewBox="0 0 28 27">
              <rect x="1" y="1" width="26" height="25" rx="6" fill="#f0551e" />
              <path d="M21 7H10c-3 0-3 5 0 5h8c3 0 3 6 0 6H6" fill="none" stroke="#fff" strokeWidth="4" />
            </Svg>
          </ImeLogo>
        </Ime>
        <WinBtns>
          <WinBtn><Svg width="11" height="11" viewBox="0 0 11 11"><path d="M0 5.5h10" stroke="#222" /></Svg></WinBtn>
          <WinBtn><Svg width="11" height="11" viewBox="0 0 11 11"><path d="M.5 2.5h7.5v8H.5zM2.5 2.5V.5h8v8H8" fill="none" stroke="#222" /></Svg></WinBtn>
          <WinBtn><Svg width="11" height="11" viewBox="0 0 11 11"><path d="M.5.5l10 10M10.5.5l-10 10" stroke="#222" /></Svg></WinBtn>
        </WinBtns>
      </TitleBar>

      <MenuRow>
        <MenuItem $w={7} />
        {menu.map(([t, w]) => <MenuItem key={t} $w={w}>{t}</MenuItem>)}
        <MenuItem $w={86}><Ic n="change" /><MenuText>新建变更</MenuText><Caret $ml={7} /></MenuItem>
        <MenuItem $w={62}><Ic n="ai" /><MenuText>广小二</MenuText></MenuItem>
        <TipBox>如何快速布置自定义范...</TipBox>
        <MenuItem $w={5} />
        <MenuItem $w={118}><Ic n="user" /><MenuText>13907298339</MenuText><Caret $ml={7} /></MenuItem>
        <MenuItem $w={56}>造价豆:0</MenuItem>
        <Ic n="bell" />
        <More>»</More>
      </MenuRow>

      <Bar>
        <Seg $w={152} $h={30} $pl={4}>
          <Ic n="new" />
          <SpacedSvg $ml={8} width="18" height="16" viewBox="0 0 16 16">{icons.open}</SpacedSvg>
          <Caret $ml={6} />
          <SpacedSvg $ml={7} width="15" height="15" viewBox="0 0 16 16">{icons.save}</SpacedSvg>
          <Sep $mr={0} $ml={7} />
          <SpacedSvg $ml={7} width="16" height="16" viewBox="0 0 16 16">{icons.undo}</SpacedSvg>
          <Caret $ml={7} />
          <More>»</More>
        </Seg>
        <Seg $w={548} $h={30} $ml={1} $pl={4}>
          <ToolRun items={row1a} />
          <More $mr={6}>»</More>
        </Seg>
        <Seg $w={663} $h={30} $ml={2} $pl={2}>
          <Combo $w={61} $mr={5}>
            <Ic n="cube" /><ComboText>三维</ComboText><ComboDrop><Caret /></ComboDrop>
          </Combo>
          <Tool $w={60}><Ic n="top" /><Label>俯视</Label><Caret $ml={2} /></Tool>
          <Tool $w={75} $on $gap={3}><Ic n="orbit" /><Label>动态观察</Label></Tool>
          <Spacer $w={3} />
          <Tool $w={75}><Ic n="local" /><Label $off>局部三维</Label></Tool>
          <Sep />
          <ToolRun items={row1c} />
          <More>»</More>
        </Seg>
      </Bar>

      <Body>
        <Side>
          <SideHead>
            模块导航栏
            <HeadGlyph $ml={118} width="9" height="9" viewBox="0 0 9 9"><path d="M2.5 1h4v4h-4zM.5 5.5h8M4.5 5.5V9" fill="none" stroke="#fff" /></HeadGlyph>
            <HeadGlyph $ml={9} width="9" height="9" viewBox="0 0 9 9"><path d="M.5.5l8 8M8.5.5l-8 8" stroke="#fff" /></HeadGlyph>
          </SideHead>
          <SideBtn>工程设置</SideBtn>
          <SideBtn>绘图输入</SideBtn>
          <SidePanel>
            <TreeTools><Ic n="addTree" /><Ic n="delTree" /></TreeTools>
            <Tree>
              <TreeOpen l="常用构件类型" />
              <TreeChild i="tGrid" l="轴网" k="J" rail />
              <TreeChild i="tRaft" l="筏板基础" k="M" rail />
              <TreeChild i="tCol" l="框柱" k="Z" rail />
              <TreeChild i="tWall" l="剪力墙" k="Q" rail />
              <TreeChild i="tBeam" l="梁" k="L" rail />
              <TreeChild i="tSlab" l="现浇板" k="B" last rail />
              <TreeCollapsed l="轴线" />
              <TreeCollapsed l="柱" />
              <TreeCollapsed l="墙" />
              <TreeCollapsed l="门窗洞" />
              <TreeCollapsed l="梁" />
              <TreeCollapsed l="板" />
              <TreeCollapsed l="基础" />
              <TreeCollapsed l="其它" />
              <TreeOpen l="自定义" />
              <TreeChild i="tPoint" l="自定义点" rail />
              <TreeChild i="tLine" l="自定义线" k="X" sel tail rail />
              <TreeChild i="tFace" l="自定义面" rail />
              <TreeChild i="tDim" l="尺寸标注" k="W" last rail />
              <TreeCollapsed l={<><Latin>CAD</Latin>识别</>} tail={<><Tile $ml={5}><Ic n="tile" s={15} /></Tile><NewTag>NEW</NewTag></>} />
            </Tree>
          </SidePanel>
          <SideBtn>单构件输入</SideBtn>
          <SideBtn>报表预览</SideBtn>
        </Side>

        <Right>
          <Bar>
            <Seg $w={790} $h={26} $ml={1}>
              <Grip />
              <ToolRun items={row2} />
            </Seg>
          </Bar>
          <RowGap $h={1} />
          <Bar>
            <Seg $w={565} $h={27} $ml={1}>
              <Grip $mr={2} />
              <Combo $w={56} $mr={4}>第7层<ComboDrop><Caret /></ComboDrop></Combo>
              <Combo $w={70} $mr={2}>自定义<ComboDrop><Caret /></ComboDrop></Combo>
              <Combo $w={69} $mr={3}>自定义线<ComboDrop><Caret /></ComboDrop></Combo>
              <Combo $w={70} $mr={5}>ZDYX-20<ComboDrop><Caret /></ComboDrop></Combo>
              <Sep />
              <ToolRun items={row3a} />
            </Seg>
            <Seg $w={422} $h={27} $ml={75}>
              <Grip />
              <ToolRun items={row3b} />
              <HiTool $w={75} $on $gap={3}><Ic n="dim" /><Label>尺寸标注</Label></HiTool>
              <HiDrop><Caret /></HiDrop>
            </Seg>
          </Bar>
          <RowGap $h={2} />
          <Bar>
            <Seg $w={488} $h={28} $ml={1}>
              <Grip />
              <ToolRun items={row4a} />
              <Combo $w={55} $mr={5}><ComboDrop><Caret /></ComboDrop></Combo>
              <ToolRun items={row4b} />
            </Seg>
            <Seg $w={30} $h={28} $ml={3}>
              <Grip $mr={0} />
              <Combo $w={23} />
            </Seg>
          </Bar>

          <Canvas viewBox="217 168 1149 507" shapeRendering="crispEdges">
            <path d="M217 168H318L307 194L300 208L274 240L262 255L239 273L217 286Z" fill="#00b000" />
            <RedLine d="M267 249L492 168" />
            <RedLine d="M307 194L930 675" />
            <RedLine d="M274 240L838 675" />
            <RedLine d="M267 249L820 675" />
            <RedLine d="M217 430L534 675" />
            <RedLine d="M217 517L640 366" />
            <RedLine d="M304 675L1366 292" />
            <polygon points="600,448 618,442 616,459 637,476" fill="#00e800" />
            <polygon points="637,476 707,451 726,463 1319,250 1305,321 620,568" fill="#00b000" />
            <polygon points="600,448 637,476 620,568 582,539" fill="#009c00" />
            <polygon points="628,313 1029,168 1366,168 1366,170 739,394 647,322" fill="#0073e6" />
            <polygon points="628,313 1029,168 1064,168 647,322" fill="#006edf" />
            <polygon points="739,394 1366,170 1366,234 726,463" fill="#0059b3" />
            <polygon points="628,313 647,322 739,394 726,463 707,451 637,476 616,459 638,343 624,332" fill="#00509f" />
            <polygon points="661,361 716,403 707,451 637,476" fill="#0059ad" />
            <g fill="none" stroke="#ffffff" strokeOpacity="0.45">
              <circle cx="791" cy="421" r="225" />
              <circle cx="791" cy="196" r="14" />
              <circle cx="791" cy="646" r="14" />
              <circle cx="566" cy="421" r="14" />
              <circle cx="1016" cy="421" r="14" />
            </g>
            <circle cx="230" cy="513" r="12.5" fill="none" stroke="#007a00" />
            <text x="226" y="518" fontFamily="Liberation Mono" fontSize="13" fontWeight="700" fill="#d8d8d8" shapeRendering="auto">0</text>
            <g shapeRendering="auto">
              <path d="M271 625L279 590" stroke="#0a78ff" strokeWidth="3.4" />
              <path d="M279 584L275 596L282 596Z" fill="#0a78ff" />
              <path d="M271 625L246 605" stroke="#20f020" strokeWidth="2.4" />
              <path d="M240 600L249 602L245 609Z" fill="#20f020" />
              <path d="M271 625L300 614" stroke="#ff1010" strokeWidth="3" />
              <path d="M308 612L299 609L302 618Z" fill="#ff1010" />
              <text x="269" y="590" fontFamily="Liberation Sans" fontSize="12" fill="#2a8cff">Z</text>
              <text x="251" y="604" fontFamily="Liberation Sans" fontSize="11" fill="#20f020">Y</text>
              <text x="288" y="611" fontFamily="Liberation Sans" fontSize="11" fill="#ff1010">X</text>
            </g>
          </Canvas>

          <RowGap $h={2} />
          <Bar>
            <Seg $w={209} $h={28} $ml={1}>
              <Grip />
              <ToolRun items={bot1} />
              <Tool $w={75} $on $gap={3}><Ic n="snap" /><Label>对象捕捉</Label></Tool>
              <Spacer $w={3} />
              <ToolRun items={bot2} />
            </Seg>
            <Seg $w={264} $h={28} $ml={1}>
              <Grip />
              <ToolRun items={bot3} />
              <Tool $w={51} $on><Ic n="perp" /><Label>垂点</Label></Tool>
              <Tool $w={51} $on><Ic n="mid" /><Label>中点</Label></Tool>
              <Spacer $w={3} />
              <ToolRun items={bot4} />
            </Seg>
            <Seg $w={410} $h={28} $ml={2}>
              <Grip $mr={2} />
              <Combo $w={57} $mr={5}>不偏移<ComboDrop><Caret /></ComboDrop></Combo>
              <Sep $mr={2} />
              <Gray $w={19}>X=</Gray>
              <Spin $w={57}>0<SpinArrows><ArrowUp /><ArrowDown /></SpinArrows></Spin>
              <Gray $w={27} $ml={2}>mm</Gray>
              <Gray $w={18}>Y=</Gray>
              <Spin $w={57}>0<SpinArrows><ArrowUp /><ArrowDown /></SpinArrows></Spin>
              <Gray $w={26} $ml={2}>mm</Gray>
              <Sep $mr={3} />
              <Check />
              <RotLabel>旋转</RotLabel>
              <Spin $w={68}>0.000<SpinArrows><ArrowUp /><ArrowDown /></SpinArrows></Spin>
              <Gray $w={7} $ml={2}>°</Gray>
            </Seg>
          </Bar>
        </Right>
      </Body>

      <Status>
        <Cell $w={147}><Latin>X=112539 Y=-9863</Latin></Cell>
        <Cell $w={77}>层高:<Latin>2.8m</Latin></Cell>
        <Cell $w={97}>底标高:<Latin>20.35m</Latin></Cell>
        <Cell $w={47}><Latin>1(1)</Latin></Cell>
        <Cell />
        <Cell $w={70}><Latin>509 FPS</Latin></Cell>
      </Status>

      <Task>
        <Start>
          <Svg width="16" height="16" viewBox="0 0 16 16"><path d="M0 2.3L6.5 1.4V7.5H0zM7.3 1.3L16 0V7.5H7.3zM0 8.3h6.5v6.3L0 13.7zM7.3 8.3H16V16l-8.7-1.2z" fill="#fff" /></Svg>
        </Start>
        <Search>
          <SearchRing />
          在这里输入你要搜索的内容
          <MicWrap><Svg width="12" height="18" viewBox="0 0 12 18"><rect x="3.5" y=".5" width="5" height="11" rx="2.5" fill="none" stroke="#9a9a9a" /><path d="M1 8c0 6 10 6 10 0M6 13v4M3 17.5h6" fill="none" stroke="#9a9a9a" /></Svg></MicWrap>
        </Search>
        <TaskBtn $w={49}><Svg width="20" height="14" viewBox="0 0 20 14"><path d="M4.5.5h11v13h-11zM2.5 2.5H.5v9h2M17.5 2.5h2v9h-2" fill="none" stroke="#fff" /></Svg></TaskBtn>
        <TaskBtn $w={51}><TaskIcon n="fan" /></TaskBtn>
        <TaskBtn $w={51}><TaskIcon n="e1" /></TaskBtn>
        <TaskBtn $w={52}><TaskIcon n="swirl" /></TaskBtn>
        <TaskBtn $w={51}><TaskIcon n="edge" /></TaskBtn>
        <TaskBtn $w={49}><TaskIcon n="ie" /></TaskBtn>
        <TaskBtn $w={49}><TaskIcon n="files" /></TaskBtn>
        <TaskBtn $w={49} $run><TaskIcon n="g" /></TaskBtn>
        <TaskBtn $w={50} $run><TaskIcon n="gball" /></TaskBtn>
        <TaskBtn $w={49} $active $run><TaskIcon n="app" /></TaskBtn>
        <Tray>
          <TrayItem $w={36}>链接</TrayItem>
          <TrayItem $w={24}><Svg width="12" height="7" viewBox="0 0 12 7"><path d="M.5 6.5L6 1l5.5 5.5" fill="none" stroke="#fff" /></Svg></TrayItem>
          <TrayItem $w={24}><Svg width="16" height="11" viewBox="0 0 16 11"><rect x="3.5" y="2.5" width="11" height="7" fill="none" stroke="#fff" /><rect x="5" y="4" width="8" height="4" fill="#fff" /><path d="M0 4h3M2 1v3" stroke="#fff" /></Svg></TrayItem>
          <TrayItem $w={24}><Svg width="14" height="12" viewBox="0 0 14 12"><path d="M1 11A8 8 0 0 1 10 2M3 11a5 5 0 0 1 6-6M6 11a3 3 0 0 1 3-3" fill="none" stroke="#c8c8c8" /><circle cx="11" cy="10.5" r="1.5" fill="#fff" /></Svg></TrayItem>
          <TrayItem $w={22}><Svg width="16" height="13" viewBox="0 0 16 13"><path d="M1 4.5h2.5L7 1.5v10l-3.5-3H1zM10 3.5q2 3 0 6M12.5 1.5q3 5 0 10" fill="none" stroke="#d8d8d8" /></Svg></TrayItem>
          <TrayItem $w={32}><Svg width="23" height="13" viewBox="0 0 23 13"><rect x=".5" y=".5" width="22" height="12" fill="none" stroke="#fff" /><path d="M3 4h17M3 6.5h17" stroke="#fff" strokeDasharray="1.4 .9" /><path d="M5 9.5h13" stroke="#fff" /></Svg></TrayItem>
          <TrayItem $w={26}><TrayA>A</TrayA></TrayItem>
          <TrayItem $w={30}><Svg width="16" height="16" viewBox="0 0 28 27"><rect x="1" y="1" width="26" height="25" rx="6" fill="#f0551e" /><path d="M21 7H10c-3 0-3 5 0 5h8c3 0 3 6 0 6H6" fill="none" stroke="#fff" strokeWidth="4" /></Svg></TrayItem>
          <Clock><span>23:52</span><span>2018/7/15</span></Clock>
          <TrayItem $w={41}><Svg width="16" height="16" viewBox="0 0 16 16"><path d="M.5.5h15v11H9l-2 3v-3H.5z" fill="none" stroke="#fff" /></Svg></TrayItem>
          <EdgeTail />
        </Tray>
      </Task>
    </Page>
  );
}
